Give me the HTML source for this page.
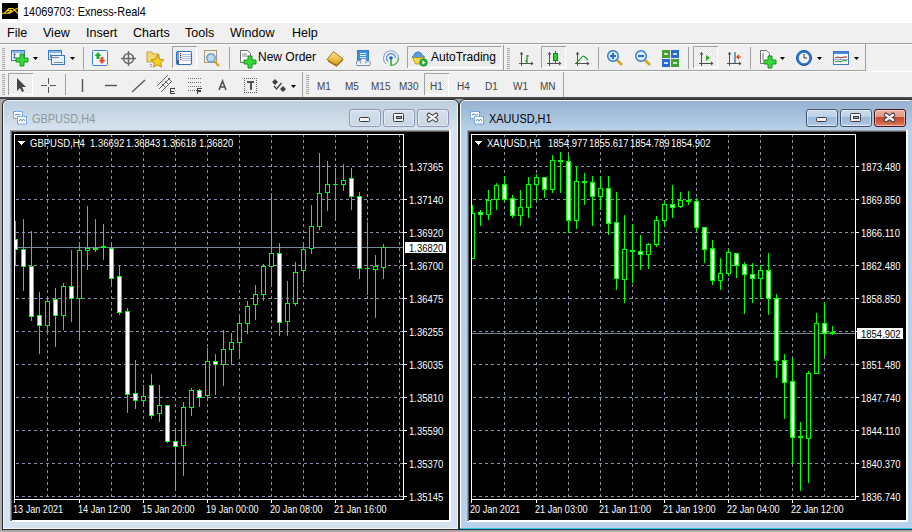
<!DOCTYPE html><html><head><meta charset="utf-8"><style>html,body{margin:0;padding:0;}body{width:912px;height:532px;overflow:hidden;position:relative;background:#f0f0f0;font-family:"Liberation Sans",sans-serif;}</style></head><body><div style="position:absolute;left:0px;top:0px;width:912px;height:23px;background:#fff"></div>
<svg style="position:absolute;left:2px;top:3px" width="16" height="16" viewBox="0 0 16 16"><rect width="16" height="16" fill="#000"/><path d="M0 10.3 H8 M2.3 10.3 L6.8 5.5 H11 M4.5 8.3 Q7 6.8 9.5 7.3 Q8.5 9.5 5.5 10 M7.5 10.3 L15.5 5.2 M10.8 5.6 L16 10.3" stroke="#f5c800" stroke-width="1.1" fill="none"/></svg>
<div style="position:absolute;left:23px;top:6px;font-size:12.5px;line-height:12.5px;color:#000;white-space:nowrap;transform:scaleX(0.875);transform-origin:0 0;">14069703: Exness-Real4</div>
<div style="position:absolute;left:0px;top:23px;width:912px;height:20px;background:#f0f0f0"></div>
<div style="position:absolute;left:7px;top:27px;font-size:12.5px;line-height:12.5px;color:#000;white-space:nowrap;">File</div>
<div style="position:absolute;left:43px;top:27px;font-size:12.5px;line-height:12.5px;color:#000;white-space:nowrap;">View</div>
<div style="position:absolute;left:86px;top:27px;font-size:12.5px;line-height:12.5px;color:#000;white-space:nowrap;">Insert</div>
<div style="position:absolute;left:133px;top:27px;font-size:12.5px;line-height:12.5px;color:#000;white-space:nowrap;">Charts</div>
<div style="position:absolute;left:185px;top:27px;font-size:12.5px;line-height:12.5px;color:#000;white-space:nowrap;">Tools</div>
<div style="position:absolute;left:230px;top:27px;font-size:12.5px;line-height:12.5px;color:#000;white-space:nowrap;">Window</div>
<div style="position:absolute;left:292px;top:27px;font-size:12.5px;line-height:12.5px;color:#000;white-space:nowrap;">Help</div>
<div style="position:absolute;left:0px;top:43px;width:912px;height:1px;background:#a0a0a0"></div>
<div style="position:absolute;left:0px;top:44px;width:912px;height:53px;background:#f0f0f0"></div>
<div style="position:absolute;left:0px;top:44px;width:912px;height:1px;background:#fbfbfb"></div>
<div style="position:absolute;left:0px;top:70px;width:866px;height:1px;background:#a0a0a0"></div>
<div style="position:absolute;left:865px;top:44px;width:1px;height:27px;background:#a0a0a0"></div>
<div style="position:absolute;left:0px;top:71px;width:912px;height:1px;background:#fdfdfd"></div>
<svg style="position:absolute;left:0;top:0" width="912" height="100"><defs><pattern id="chk" width="2" height="2" patternUnits="userSpaceOnUse"><rect width="2" height="2" fill="#f6f6f6"/><rect width="1" height="1" fill="#e6e6e6"/><rect x="1" y="1" width="1" height="1" fill="#e6e6e6"/></pattern></defs><rect x="2" y="48" width="3" height="1" fill="#a8a8a8"/><rect x="2" y="50" width="3" height="1" fill="#a8a8a8"/><rect x="2" y="52" width="3" height="1" fill="#a8a8a8"/><rect x="2" y="54" width="3" height="1" fill="#a8a8a8"/><rect x="2" y="56" width="3" height="1" fill="#a8a8a8"/><rect x="2" y="58" width="3" height="1" fill="#a8a8a8"/><rect x="2" y="60" width="3" height="1" fill="#a8a8a8"/><rect x="2" y="62" width="3" height="1" fill="#a8a8a8"/><rect x="2" y="64" width="3" height="1" fill="#a8a8a8"/><rect x="2" y="66" width="3" height="1" fill="#a8a8a8"/><rect x="2" y="68" width="3" height="1" fill="#a8a8a8"/><rect x="11.5" y="50.5" width="13" height="10" fill="#eaf2fb" stroke="#3a78c8"/><rect x="12" y="51" width="12" height="2" fill="#8ab8ec"/><path d="M14.5 53.5v5" stroke="#5a7aa8"/><path d="M13 55l1.5-1.5 1.5 1.5 M13 57l1.5 1.5 1.5-1.5" stroke="#5a7aa8" fill="none" stroke-width=".8"/><path d="M20 54 h4 v4 h4 v4 h-4 v4 h-4 v-4 h-4 v-4 h4 z" fill="#3ad83a" stroke="#108a10" stroke-width="0.9"/><path d="M33 57 h5 l-2.5 3 z" fill="#000"/><rect x="48.5" y="50.5" width="13" height="9" fill="#eaf2fb" stroke="#3a78c8"/><rect x="51.5" y="55.5" width="13" height="9" fill="#eaf2fb" stroke="#3a78c8"/><rect x="49" y="51" width="12" height="2" fill="#8ab8ec"/><path d="M51 57.5h8 M54 62.5h9 M50.5 54v4" stroke="#6a8ab8"/><path d="M70 57 h5 l-2.5 3 z" fill="#000"/><rect x="83" y="47" width="1" height="22" fill="#a0a0a0"/><rect x="92.5" y="50.5" width="15" height="15" rx="1" fill="#f4f8fc" stroke="#3a80d0"/><path d="M98 52 l-3.5 4 h2 v3 h3 v-3 h2 z" fill="#20b030"/><path d="M102 64 l3.5-4 h-2 v-3 h-3 v3 h-2 z" fill="#f05020"/><circle cx="128.5" cy="58.5" r="5" fill="none" stroke="#6a6a6a" stroke-width="1.5"/><path d="M128.5 51v15 M121 58.5h15" stroke="#6a6a6a" stroke-width="1.5"/><path d="M147 52h5l1 2h6v8h-12z" fill="#f2d870" stroke="#c8a030"/><path d="M157.5 55 l2 4.2 4.5 .6-3.3 3 .9 4.4-4.1-2.2-4.1 2.2.9-4.4-3.3-3 4.5-.6z" fill="#f5d020" stroke="#b08010" stroke-width="0.8"/><path d="M151 64v3" stroke="#444" stroke-dasharray="1 1"/><rect x="172" y="46" width="25" height="22" fill="url(#chk)"/><path d="M172.5 68 V46.5 H197" stroke="#a0a0a0" fill="none"/><path d="M196.5 47 V67.5 H173" stroke="#ffffff" fill="none"/><rect x="176.5" y="51.5" width="15" height="13" rx="1.5" fill="#fff" stroke="#3070c0" stroke-width="1.1"/><rect x="177" y="52" width="2" height="12" fill="#6aa0e0"/><path d="M178 60v4" stroke="#203040"/><path d="M182 54.5h9 M182 56.5h9 M182 58.5h9 M182 60.5h9" stroke="#8ab0e0" stroke-width=".8"/><rect x="180" y="53" width="1.2" height="1.2" fill="#e02020"/><rect x="180" y="55" width="1.2" height="1.2" fill="#222"/><rect x="180" y="57" width="1.2" height="1.2" fill="#222"/><rect x="180" y="59" width="1.2" height="1.2" fill="#e02020"/><rect x="204.5" y="50.5" width="12" height="12" fill="#f4f0e4" stroke="#a89878"/><circle cx="211" cy="58" r="4.2" fill="#bcd8f0" stroke="#4a90d8" stroke-width="1.2"/><path d="M214 61l5 5" stroke="#d0a020" stroke-width="2.2"/><rect x="229" y="47" width="1" height="22" fill="#a0a0a0"/><path d="M240.5 50.5h7l3 3v9h-10z" fill="#fafafa" stroke="#707070"/><path d="M242 54h5 M242 56h6" stroke="#909090"/><path d="M248 56 h4 v4 h4 v4 h-4 v4 h-4 v-4 h-4 v-4 h4 z" fill="#3ad83a" stroke="#108a10" stroke-width="0.9"/><defs><linearGradient id="gold" x1="0" y1="0" x2="0" y2="1"><stop offset="0" stop-color="#fbe88a"/><stop offset="1" stop-color="#d49a18"/></linearGradient></defs><path d="M327 59.5 L333.5 51.5 L343 59 L336.5 65.5 Z" fill="url(#gold)" stroke="#9a6410" stroke-width=".9"/><path d="M328 61 L336.5 66 L343 59.5" stroke="#a86c10" stroke-width="1.3" fill="none"/><rect x="357.5" y="50.5" width="11" height="10" fill="#3a90e8" stroke="#1a64c0" stroke-width=".8"/><path d="M360 53.5h6 M360 55.5h6 M360 57.5h6" stroke="#e8f4ff" stroke-width="1"/><g fill="#eef2fa" stroke="#6a84b0" stroke-width=".9"><circle cx="359" cy="63" r="2.6"/><circle cx="363.5" cy="61.5" r="3.3"/><circle cx="368" cy="63.3" r="2.5"/></g><path d="M357 63.5 h12 v1.8 h-12z" fill="#eef2fa"/><path d="M356.5 65.5 h13" stroke="#6a84b0" stroke-width=".9"/><path d="M386 64 A7.5 7.5 0 1 1 398.5 58" fill="none" stroke="#6a9ad8" stroke-width="1"/><path d="M388 61.5 A4.5 4.5 0 1 1 395.5 58" fill="none" stroke="#4a80d0" stroke-width="1.1"/><circle cx="391" cy="58" r="1.8" fill="#1a5ac8"/><path d="M391 59v7" stroke="#30b030" stroke-width="1.6"/><path d="M391.5 65.5 A7.5 7.5 0 0 0 398.5 58" fill="none" stroke="#50b050" stroke-width="1.4"/><rect x="407" y="46" width="94" height="22" fill="url(#chk)"/><path d="M407.5 68 V46.5 H501" stroke="#a0a0a0" fill="none"/><path d="M500.5 47 V67.5 H408" stroke="#ffffff" fill="none"/><path d="M412 57 q2-1.5 3-4 q3-2.5 6 0 q1 2.5 3.5 3.5 q-5 2.5-12.5 .5z" fill="#5aa0e0" stroke="#3a78b8" stroke-width=".8"/><path d="M412.5 57.5 h12 l-3 6.5 h-6z" fill="#f2d84a" stroke="#a88a20" stroke-width=".8"/><circle cx="423.5" cy="62.5" r="3.8" fill="#18b030" stroke="#0a8a20" stroke-width=".6"/><path d="M422.3 60.3v4.4l3.4-2.2z" fill="#fff"/><rect x="503" y="45" width="1" height="25" fill="#a0a0a0"/><rect x="507" y="48" width="3" height="1" fill="#a8a8a8"/><rect x="507" y="50" width="3" height="1" fill="#a8a8a8"/><rect x="507" y="52" width="3" height="1" fill="#a8a8a8"/><rect x="507" y="54" width="3" height="1" fill="#a8a8a8"/><rect x="507" y="56" width="3" height="1" fill="#a8a8a8"/><rect x="507" y="58" width="3" height="1" fill="#a8a8a8"/><rect x="507" y="60" width="3" height="1" fill="#a8a8a8"/><rect x="507" y="62" width="3" height="1" fill="#a8a8a8"/><rect x="507" y="64" width="3" height="1" fill="#a8a8a8"/><rect x="507" y="66" width="3" height="1" fill="#a8a8a8"/><rect x="507" y="68" width="3" height="1" fill="#a8a8a8"/><path d="M521.5 52 v14 M519 63.5 h14" stroke="#505050" stroke-width="1" fill="none"/><path d="M519.5 54.5 l2-2.5 2 2.5z M531 61.5 l2.5 2-2.5 2z" fill="#505050"/><path d="M527 55v8 M527 56h2 M525 61h2" stroke="#109010" stroke-width="1.2" fill="none"/><rect x="541" y="46" width="25" height="22" fill="url(#chk)"/><path d="M541.5 68 V46.5 H566" stroke="#a0a0a0" fill="none"/><path d="M565.5 47 V67.5 H542" stroke="#ffffff" fill="none"/><path d="M549.5 52 v14 M547 63.5 h14" stroke="#505050" stroke-width="1" fill="none"/><path d="M547.5 54.5 l2-2.5 2 2.5z M559 61.5 l2.5 2-2.5 2z" fill="#505050"/><rect x="553.5" y="53.5" width="4" height="7" fill="#30d030" stroke="#108010"/><path d="M555.5 51v2 M555.5 61v2" stroke="#108010"/><path d="M577.5 52 v14 M575 63.5 h14" stroke="#505050" stroke-width="1" fill="none"/><path d="M575.5 54.5 l2-2.5 2 2.5z M587 61.5 l2.5 2-2.5 2z" fill="#505050"/><path d="M576 63 q3-2 5-5 q2-3 4 -1 l3 3" stroke="#20a030" stroke-width="1.2" fill="none"/><rect x="598" y="47" width="1" height="22" fill="#a0a0a0"/><path d="M617 60 l5 5" stroke="#d0a818" stroke-width="2.6"/><circle cx="613" cy="56" r="5.3" fill="#d8ecfb" stroke="#2a78d0" stroke-width="1.4"/><path d="M610 56h6" stroke="#2a70c0" stroke-width="2"/><path d="M613 53v6" stroke="#2a70c0" stroke-width="2"/><path d="M645 60 l5 5" stroke="#d0a818" stroke-width="2.6"/><circle cx="641" cy="56" r="5.3" fill="#d8ecfb" stroke="#2a78d0" stroke-width="1.4"/><path d="M638 56h6" stroke="#2a70c0" stroke-width="2"/><rect x="662" y="50" width="8" height="8" fill="#40a030"/><rect x="671" y="50" width="8" height="8" fill="#2a6ad0"/><rect x="662" y="59" width="8" height="8" fill="#2a6ad0"/><rect x="671" y="59" width="8" height="8" fill="#40a030"/><path d="M664 54h4 M673 54h4 M664 63h4 M673 63h4" stroke="#fff" stroke-width="1.5"/><rect x="688" y="47" width="1" height="22" fill="#a0a0a0"/><rect x="693" y="46" width="25" height="22" fill="url(#chk)"/><path d="M693.5 68 V46.5 H718" stroke="#a0a0a0" fill="none"/><path d="M717.5 47 V67.5 H694" stroke="#ffffff" fill="none"/><path d="M701.5 52 v14 M699 63.5 h14" stroke="#505050" stroke-width="1" fill="none"/><path d="M699.5 54.5 l2-2.5 2 2.5z M711 61.5 l2.5 2-2.5 2z" fill="#505050"/><path d="M706 55v6l4-3z" fill="#20b020"/><path d="M729.5 52 v14 M727 63.5 h14" stroke="#505050" stroke-width="1" fill="none"/><path d="M727.5 54.5 l2-2.5 2 2.5z M739 61.5 l2.5 2-2.5 2z" fill="#505050"/><path d="M735 52v11" stroke="#2060a0" stroke-width="1.2"/><path d="M741 57h-4 M739 55l-2 2 2 2" stroke="#d04010" stroke-width="1.2" fill="none"/><rect x="750" y="47" width="1" height="22" fill="#a0a0a0"/><path d="M760.5 50.5h6l3 3v10h-9z" fill="#fafafa" stroke="#707070"/><path d="M763 53v7" stroke="#707070"/><path d="M768 56 h4 v4 h4 v4 h-4 v4 h-4 v-4 h-4 v-4 h4 z" fill="#3ad83a" stroke="#108a10" stroke-width="0.9"/><path d="M780 57 h5 l-2.5 3 z" fill="#000"/><circle cx="804" cy="58" r="7.5" fill="#2a78d8" stroke="#1850a0"/><circle cx="804" cy="58" r="5.2" fill="#f4f4f4"/><path d="M804 54v4h3" stroke="#333" stroke-width="1" fill="none"/><path d="M817 57 h5 l-2.5 3 z" fill="#000"/><rect x="833.5" y="51.5" width="15" height="13" fill="#f4f8ff" stroke="#3a78c8"/><rect x="834" y="52" width="14" height="2" fill="#4a88d8"/><path d="M835 58 l3-1 3 1 3-1 3 0" stroke="#b02020" fill="none"/><path d="M835 62 l3-1 3 1 3-2 3 1" stroke="#20a020" fill="none"/><path d="M834 59.5h14" stroke="#8ab0e0"/><path d="M854 57 h5 l-2.5 3 z" fill="#000"/><rect x="2" y="74" width="3" height="1" fill="#a8a8a8"/><rect x="2" y="76" width="3" height="1" fill="#a8a8a8"/><rect x="2" y="78" width="3" height="1" fill="#a8a8a8"/><rect x="2" y="80" width="3" height="1" fill="#a8a8a8"/><rect x="2" y="82" width="3" height="1" fill="#a8a8a8"/><rect x="2" y="84" width="3" height="1" fill="#a8a8a8"/><rect x="2" y="86" width="3" height="1" fill="#a8a8a8"/><rect x="2" y="88" width="3" height="1" fill="#a8a8a8"/><rect x="2" y="90" width="3" height="1" fill="#a8a8a8"/><rect x="2" y="92" width="3" height="1" fill="#a8a8a8"/><rect x="2" y="94" width="3" height="1" fill="#a8a8a8"/><rect x="8" y="73" width="25" height="22" fill="url(#chk)"/><path d="M8.5 95 V73.5 H33" stroke="#a0a0a0" fill="none"/><path d="M32.5 74 V94.5 H9" stroke="#ffffff" fill="none"/><path d="M17 78 v13 l3-3 2 4 2-1-2-4 4 0z" fill="#444"/><path d="M48.5 78v6 M48.5 87v6 M41 85.5h6 M50 85.5h6" stroke="#555" stroke-width="1" shape-rendering="crispEdges"/><rect x="65" y="74" width="1" height="21" fill="#a0a0a0"/><path d="M82.5 79v13" stroke="#555" stroke-width="1.4"/><path d="M105 85.5h12" stroke="#555" stroke-width="1.4"/><path d="M132 92 l13-12" stroke="#555" stroke-width="1.3"/><path d="M159 89 l11-11 M161 92 l11-11 M157 86 l11-11" stroke="#606060" stroke-width="1" fill="none"/><path d="M162 84 l3 3 M165 81 l3 3 M168 78 l3 3" stroke="#606060" stroke-width="1"/><path d="M170.5 88.5h4 M170.5 88v6 M170.5 91h3 M170.5 93.5h4" stroke="#404040" stroke-width="1" fill="none" shape-rendering="crispEdges"/><g fill="#707070" shape-rendering="crispEdges"><rect x="188" y="78" width="1" height="1"/><rect x="190" y="78" width="1" height="1"/><rect x="192" y="78" width="1" height="1"/><rect x="194" y="78" width="1" height="1"/><rect x="196" y="78" width="1" height="1"/><rect x="198" y="78" width="1" height="1"/><rect x="200" y="78" width="1" height="1"/><rect x="188" y="82" width="1" height="1"/><rect x="190" y="82" width="1" height="1"/><rect x="192" y="82" width="1" height="1"/><rect x="194" y="82" width="1" height="1"/><rect x="196" y="82" width="1" height="1"/><rect x="198" y="82" width="1" height="1"/><rect x="200" y="82" width="1" height="1"/><rect x="188" y="86" width="1" height="1"/><rect x="190" y="86" width="1" height="1"/><rect x="192" y="86" width="1" height="1"/><rect x="194" y="86" width="1" height="1"/><rect x="196" y="86" width="1" height="1"/><rect x="198" y="86" width="1" height="1"/><rect x="200" y="86" width="1" height="1"/><rect x="188" y="90" width="1" height="1"/><rect x="190" y="90" width="1" height="1"/><rect x="192" y="90" width="1" height="1"/><rect x="194" y="90" width="1" height="1"/><rect x="196" y="90" width="1" height="1"/></g><path d="M197.5 88v6 M197 88.5h5 M197 91h4" stroke="#404040" stroke-width="1.3" fill="none" shape-rendering="crispEdges"/><path d="M219 90 L222.5 81 L226 90 M220.3 87 h4.4" stroke="#505050" stroke-width="1.6" fill="none"/><g fill="#606060" shape-rendering="crispEdges"><rect x="244" y="78" width="1" height="1"/><rect x="244" y="92" width="1" height="1"/><rect x="246" y="78" width="1" height="1"/><rect x="246" y="92" width="1" height="1"/><rect x="248" y="78" width="1" height="1"/><rect x="248" y="92" width="1" height="1"/><rect x="250" y="78" width="1" height="1"/><rect x="250" y="92" width="1" height="1"/><rect x="252" y="78" width="1" height="1"/><rect x="252" y="92" width="1" height="1"/><rect x="254" y="78" width="1" height="1"/><rect x="254" y="92" width="1" height="1"/><rect x="256" y="78" width="1" height="1"/><rect x="256" y="92" width="1" height="1"/><rect x="244" y="78" width="1" height="1"/><rect x="256" y="78" width="1" height="1"/><rect x="244" y="80" width="1" height="1"/><rect x="256" y="80" width="1" height="1"/><rect x="244" y="82" width="1" height="1"/><rect x="256" y="82" width="1" height="1"/><rect x="244" y="84" width="1" height="1"/><rect x="256" y="84" width="1" height="1"/><rect x="244" y="86" width="1" height="1"/><rect x="256" y="86" width="1" height="1"/><rect x="244" y="88" width="1" height="1"/><rect x="256" y="88" width="1" height="1"/><rect x="244" y="90" width="1" height="1"/><rect x="256" y="90" width="1" height="1"/><rect x="244" y="92" width="1" height="1"/><rect x="256" y="92" width="1" height="1"/></g><path d="M247 81.5h7 M250.5 81v9" stroke="#505050" stroke-width="2" fill="none" shape-rendering="crispEdges"/><path d="M275 79 l3 3 -3 3 -3-3z M283 86 l3 3 -3 3 -3-3z" fill="#404040"/><path d="M274 86 l2.5 3 l5-6" stroke="#404040" stroke-width="1.3" fill="none"/><path d="M291 85 h5 l-2.5 3 z" fill="#000"/><rect x="302" y="72" width="1" height="25" fill="#a0a0a0"/><rect x="306" y="75" width="3" height="1" fill="#a8a8a8"/><rect x="306" y="77" width="3" height="1" fill="#a8a8a8"/><rect x="306" y="79" width="3" height="1" fill="#a8a8a8"/><rect x="306" y="81" width="3" height="1" fill="#a8a8a8"/><rect x="306" y="83" width="3" height="1" fill="#a8a8a8"/><rect x="306" y="85" width="3" height="1" fill="#a8a8a8"/><rect x="306" y="87" width="3" height="1" fill="#a8a8a8"/><rect x="306" y="89" width="3" height="1" fill="#a8a8a8"/><rect x="306" y="91" width="3" height="1" fill="#a8a8a8"/><rect x="306" y="93" width="3" height="1" fill="#a8a8a8"/><rect x="424" y="73" width="25" height="22" fill="url(#chk)"/><path d="M424.5 95 V73.5 H449" stroke="#a0a0a0" fill="none"/><path d="M448.5 74 V94.5 H425" stroke="#ffffff" fill="none"/><rect x="563" y="72" width="1" height="25" fill="#a0a0a0"/></svg>
<div style="position:absolute;left:317px;top:82px;font-size:10px;line-height:10px;color:#444;white-space:nowrap;">M1</div>
<div style="position:absolute;left:345px;top:82px;font-size:10px;line-height:10px;color:#444;white-space:nowrap;">M5</div>
<div style="position:absolute;left:371px;top:82px;font-size:10px;line-height:10px;color:#444;white-space:nowrap;">M15</div>
<div style="position:absolute;left:399px;top:82px;font-size:10px;line-height:10px;color:#444;white-space:nowrap;">M30</div>
<div style="position:absolute;left:430px;top:82px;font-size:10px;line-height:10px;color:#444;white-space:nowrap;">H1</div>
<div style="position:absolute;left:457px;top:82px;font-size:10px;line-height:10px;color:#444;white-space:nowrap;">H4</div>
<div style="position:absolute;left:485px;top:82px;font-size:10px;line-height:10px;color:#444;white-space:nowrap;">D1</div>
<div style="position:absolute;left:513px;top:82px;font-size:10px;line-height:10px;color:#444;white-space:nowrap;">W1</div>
<div style="position:absolute;left:540px;top:82px;font-size:10px;line-height:10px;color:#444;white-space:nowrap;">MN</div>
<div style="position:absolute;left:258px;top:51px;font-size:12px;line-height:12px;color:#000;white-space:nowrap;">New Order</div>
<div style="position:absolute;left:431px;top:51px;font-size:12px;line-height:12px;color:#000;white-space:nowrap;">AutoTrading</div>
<div style="position:absolute;left:0px;top:97px;width:912px;height:435px;background:#ababab"></div>
<div style="position:absolute;left:0px;top:97px;width:912px;height:2px;background:#4a4a4a"></div>
<div style="position:absolute;left:2px;top:99px;width:457px;height:431px;background:#2a2a2a;border-radius:6px 6px 0 0"></div>
<div style="position:absolute;left:3px;top:100px;width:455px;height:429px;background:#eef4fc;border-radius:5px 5px 0 0"></div>
<div style="position:absolute;left:4px;top:101px;width:453px;height:427px;background:#d5e3f0;border-radius:4px 4px 0 0"></div>
<div style="position:absolute;left:4px;top:101px;width:453px;height:29px;background:linear-gradient(#bccddc,#d6e3ef);border-radius:4px 4px 0 0"></div>
<div style="position:absolute;left:3px;top:528px;width:455px;height:1px;background:#f4f8ff"></div>
<svg style="position:absolute;left:13px;top:111px" width="15" height="14" viewBox="0 0 15 14"><rect x="0.5" y="0.5" width="9" height="7" fill="#fff" stroke="#3a80e0" stroke-dasharray="1 .6"/><rect x="4.5" y="5.5" width="9" height="7.5" fill="#fff" stroke="#3a80e0" stroke-dasharray="1 .6"/><path d="M2 4 l2-1 2 1 2-1 M6 10 l1.5-2 1.5 2 1.5-2 1.5 2" stroke="#3a70c0" stroke-width=".8" fill="none"/></svg>
<div style="position:absolute;left:32px;top:113px;font-size:12.5px;line-height:12.5px;color:#8f969c;white-space:nowrap;transform:scaleX(0.875);transform-origin:0 0;">GBPUSD,H4</div>
<div style="position:absolute;left:349px;top:109px;width:32px;height:18px;background:linear-gradient(#d4dfeb,#c9d6e4);border:1px solid #8a98b4;border-radius:3px;box-sizing:border-box;box-shadow:inset 0 0 0 1px rgba(255,255,255,0.45)"></div>
<div style="position:absolute;left:383px;top:109px;width:32px;height:18px;background:linear-gradient(#d4dfeb,#c9d6e4);border:1px solid #8a98b4;border-radius:3px;box-sizing:border-box;box-shadow:inset 0 0 0 1px rgba(255,255,255,0.45)"></div>
<div style="position:absolute;left:417px;top:109px;width:32px;height:18px;background:linear-gradient(#d4dfeb,#c9d6e4);border:1px solid #8a98b4;border-radius:3px;box-sizing:border-box;box-shadow:inset 0 0 0 1px rgba(255,255,255,0.45)"></div>
<svg style="position:absolute;left:0px;top:0px" width="912" height="532" viewBox="0 0 912 532"><rect x="359.5" y="117.5" width="10" height="4" rx="1" fill="#f2f2f2" stroke="#3a3a44"/><rect x="393.5" y="113.5" width="10" height="8" rx="1" fill="#f2f2f2" stroke="#3a3a44"/><rect x="396.5" y="116.5" width="5" height="2" fill="#8aa6c4" stroke="#3a3a44"/><path d="M429 115 L436 120 M436 115 L429 120" stroke="#3a3a44" stroke-width="4.6" stroke-linecap="round"/><path d="M429 115 L436 120 M436 115 L429 120" stroke="#f2f2f2" stroke-width="2.6" stroke-linecap="round"/></svg>
<div style="position:absolute;left:10px;top:130px;width:441px;height:392px;background:#fff"></div>
<div style="position:absolute;left:10px;top:130px;width:439px;height:1px;background:#a0a0a0"></div>
<div style="position:absolute;left:10px;top:130px;width:1px;height:391px;background:#a0a0a0"></div>
<div style="position:absolute;left:11px;top:131px;width:438px;height:1px;background:#5a5a5a"></div>
<div style="position:absolute;left:11px;top:131px;width:1px;height:390px;background:#5a5a5a"></div>
<div style="position:absolute;left:12px;top:132px;width:437px;height:388px;background:#000"></div>
<svg shape-rendering="crispEdges" style="position:absolute;left:0px;top:0px" width="912" height="532" viewBox="0 0 912 532"><line x1="16" y1="166.5" x2="403" y2="166.5" stroke="#8794a8" stroke-width="1" stroke-dasharray="3 3"/><rect x="404" y="166" width="3" height="1" fill="#fff"/><line x1="16" y1="199.5" x2="403" y2="199.5" stroke="#8794a8" stroke-width="1" stroke-dasharray="3 3"/><rect x="404" y="199" width="3" height="1" fill="#fff"/><line x1="16" y1="232.5" x2="403" y2="232.5" stroke="#8794a8" stroke-width="1" stroke-dasharray="3 3"/><rect x="404" y="232" width="3" height="1" fill="#fff"/><line x1="16" y1="265.5" x2="403" y2="265.5" stroke="#8794a8" stroke-width="1" stroke-dasharray="3 3"/><rect x="404" y="265" width="3" height="1" fill="#fff"/><line x1="16" y1="298.5" x2="403" y2="298.5" stroke="#8794a8" stroke-width="1" stroke-dasharray="3 3"/><rect x="404" y="298" width="3" height="1" fill="#fff"/><line x1="16" y1="331.5" x2="403" y2="331.5" stroke="#8794a8" stroke-width="1" stroke-dasharray="3 3"/><rect x="404" y="331" width="3" height="1" fill="#fff"/><line x1="16" y1="364.5" x2="403" y2="364.5" stroke="#8794a8" stroke-width="1" stroke-dasharray="3 3"/><rect x="404" y="364" width="3" height="1" fill="#fff"/><line x1="16" y1="397.5" x2="403" y2="397.5" stroke="#8794a8" stroke-width="1" stroke-dasharray="3 3"/><rect x="404" y="397" width="3" height="1" fill="#fff"/><line x1="16" y1="430.5" x2="403" y2="430.5" stroke="#8794a8" stroke-width="1" stroke-dasharray="3 3"/><rect x="404" y="430" width="3" height="1" fill="#fff"/><line x1="16" y1="463.5" x2="403" y2="463.5" stroke="#8794a8" stroke-width="1" stroke-dasharray="3 3"/><rect x="404" y="463" width="3" height="1" fill="#fff"/><line x1="16" y1="496.5" x2="403" y2="496.5" stroke="#8794a8" stroke-width="1" stroke-dasharray="3 3"/><rect x="404" y="496" width="3" height="1" fill="#fff"/><line x1="47.5" y1="134" x2="47.5" y2="499" stroke="#8794a8" stroke-width="1" stroke-dasharray="3 3"/><line x1="79.5" y1="134" x2="79.5" y2="499" stroke="#8794a8" stroke-width="1" stroke-dasharray="3 3"/><line x1="111.5" y1="134" x2="111.5" y2="499" stroke="#8794a8" stroke-width="1" stroke-dasharray="3 3"/><line x1="143.5" y1="134" x2="143.5" y2="499" stroke="#8794a8" stroke-width="1" stroke-dasharray="3 3"/><line x1="175.5" y1="134" x2="175.5" y2="499" stroke="#8794a8" stroke-width="1" stroke-dasharray="3 3"/><line x1="207.5" y1="134" x2="207.5" y2="499" stroke="#8794a8" stroke-width="1" stroke-dasharray="3 3"/><line x1="239.5" y1="134" x2="239.5" y2="499" stroke="#8794a8" stroke-width="1" stroke-dasharray="3 3"/><line x1="271.5" y1="134" x2="271.5" y2="499" stroke="#8794a8" stroke-width="1" stroke-dasharray="3 3"/><line x1="303.5" y1="134" x2="303.5" y2="499" stroke="#8794a8" stroke-width="1" stroke-dasharray="3 3"/><line x1="335.5" y1="134" x2="335.5" y2="499" stroke="#8794a8" stroke-width="1" stroke-dasharray="3 3"/><line x1="367.5" y1="134" x2="367.5" y2="499" stroke="#8794a8" stroke-width="1" stroke-dasharray="3 3"/><line x1="399.5" y1="134" x2="399.5" y2="499" stroke="#8794a8" stroke-width="1" stroke-dasharray="3 3"/><rect x="14" y="500" width="1" height="3" fill="#fff"/><rect x="79" y="500" width="1" height="3" fill="#fff"/><rect x="143" y="500" width="1" height="3" fill="#fff"/><rect x="207" y="500" width="1" height="3" fill="#fff"/><rect x="271" y="500" width="1" height="3" fill="#fff"/><rect x="335" y="500" width="1" height="3" fill="#fff"/><rect x="14.5" y="134.5" width="389" height="365" fill="none" stroke="#fff"/><rect x="15" y="247" width="388" height="1" fill="#778899"/><clipPath id="c14"><rect x="15" y="135" width="388" height="364"/></clipPath><g clip-path="url(#c14)"><rect x="15" y="221" width="1" height="45" fill="#00ff00"/><rect x="13" y="239" width="5" height="11" fill="#00ff00"/><rect x="14" y="240" width="3" height="9" fill="#fff"/><rect x="23" y="219" width="1" height="72" fill="#00ff00"/><rect x="21" y="249" width="5" height="18" fill="#00ff00"/><rect x="22" y="250" width="3" height="16" fill="#fff"/><rect x="31" y="231" width="1" height="90" fill="#00ff00"/><rect x="29" y="266" width="5" height="51" fill="#00ff00"/><rect x="30" y="267" width="3" height="49" fill="#fff"/><rect x="39" y="292" width="1" height="62" fill="#00ff00"/><rect x="37" y="315" width="5" height="11" fill="#00ff00"/><rect x="38" y="316" width="3" height="9" fill="#fff"/><rect x="47" y="296" width="1" height="37" fill="#00ff00"/><rect x="45" y="301" width="5" height="25" fill="#00ff00"/><rect x="46" y="302" width="3" height="23" fill="#000"/><rect x="55" y="288" width="1" height="59" fill="#00ff00"/><rect x="53" y="299" width="5" height="17" fill="#00ff00"/><rect x="54" y="300" width="3" height="15" fill="#fff"/><rect x="63" y="283" width="1" height="47" fill="#00ff00"/><rect x="61" y="286" width="5" height="30" fill="#00ff00"/><rect x="62" y="287" width="3" height="28" fill="#000"/><rect x="71" y="250" width="1" height="72" fill="#00ff00"/><rect x="69" y="286" width="5" height="13" fill="#00ff00"/><rect x="70" y="287" width="3" height="11" fill="#fff"/><rect x="79" y="245" width="1" height="96" fill="#00ff00"/><rect x="77" y="250" width="5" height="49" fill="#00ff00"/><rect x="78" y="251" width="3" height="47" fill="#000"/><rect x="87" y="206" width="1" height="64" fill="#00ff00"/><rect x="85" y="248" width="5" height="3" fill="#00ff00"/><rect x="86" y="249" width="3" height="1" fill="#000"/><rect x="95" y="219" width="1" height="33" fill="#00ff00"/><rect x="93" y="248" width="5" height="2" fill="#00ff00"/><rect x="103" y="224" width="1" height="36" fill="#00ff00"/><rect x="101" y="246" width="5" height="2" fill="#00ff00"/><rect x="111" y="244" width="1" height="42" fill="#00ff00"/><rect x="109" y="248" width="5" height="31" fill="#00ff00"/><rect x="110" y="249" width="3" height="29" fill="#fff"/><rect x="119" y="266" width="1" height="49" fill="#00ff00"/><rect x="117" y="276" width="5" height="37" fill="#00ff00"/><rect x="118" y="277" width="3" height="35" fill="#fff"/><rect x="127" y="308" width="1" height="105" fill="#00ff00"/><rect x="125" y="311" width="5" height="84" fill="#00ff00"/><rect x="126" y="312" width="3" height="82" fill="#fff"/><rect x="135" y="360" width="1" height="49" fill="#00ff00"/><rect x="133" y="393" width="5" height="8" fill="#00ff00"/><rect x="134" y="394" width="3" height="6" fill="#fff"/><rect x="143" y="385" width="1" height="22" fill="#00ff00"/><rect x="141" y="396" width="5" height="5" fill="#00ff00"/><rect x="142" y="397" width="3" height="3" fill="#000"/><rect x="151" y="374" width="1" height="45" fill="#00ff00"/><rect x="149" y="385" width="5" height="31" fill="#00ff00"/><rect x="150" y="386" width="3" height="29" fill="#fff"/><rect x="159" y="385" width="1" height="37" fill="#00ff00"/><rect x="157" y="405" width="5" height="9" fill="#00ff00"/><rect x="158" y="406" width="3" height="7" fill="#000"/><rect x="167" y="405" width="1" height="38" fill="#00ff00"/><rect x="165" y="405" width="5" height="37" fill="#00ff00"/><rect x="166" y="406" width="3" height="35" fill="#fff"/><rect x="175" y="428" width="1" height="63" fill="#00ff00"/><rect x="173" y="441" width="5" height="6" fill="#00ff00"/><rect x="174" y="442" width="3" height="4" fill="#fff"/><rect x="183" y="402" width="1" height="74" fill="#00ff00"/><rect x="181" y="407" width="5" height="39" fill="#00ff00"/><rect x="182" y="408" width="3" height="37" fill="#000"/><rect x="191" y="388" width="1" height="28" fill="#00ff00"/><rect x="189" y="390" width="5" height="18" fill="#00ff00"/><rect x="190" y="391" width="3" height="16" fill="#000"/><rect x="199" y="389" width="1" height="18" fill="#00ff00"/><rect x="197" y="390" width="5" height="8" fill="#00ff00"/><rect x="198" y="391" width="3" height="6" fill="#fff"/><rect x="207" y="348" width="1" height="51" fill="#00ff00"/><rect x="205" y="361" width="5" height="35" fill="#00ff00"/><rect x="206" y="362" width="3" height="33" fill="#000"/><rect x="215" y="354" width="1" height="41" fill="#00ff00"/><rect x="213" y="361" width="5" height="4" fill="#00ff00"/><rect x="214" y="362" width="3" height="2" fill="#fff"/><rect x="223" y="330" width="1" height="56" fill="#00ff00"/><rect x="221" y="349" width="5" height="16" fill="#00ff00"/><rect x="222" y="350" width="3" height="14" fill="#000"/><rect x="231" y="333" width="1" height="32" fill="#00ff00"/><rect x="229" y="342" width="5" height="8" fill="#00ff00"/><rect x="230" y="343" width="3" height="6" fill="#000"/><rect x="239" y="315" width="1" height="43" fill="#00ff00"/><rect x="237" y="323" width="5" height="20" fill="#00ff00"/><rect x="238" y="324" width="3" height="18" fill="#000"/><rect x="247" y="301" width="1" height="33" fill="#00ff00"/><rect x="245" y="306" width="5" height="18" fill="#00ff00"/><rect x="246" y="307" width="3" height="16" fill="#000"/><rect x="255" y="285" width="1" height="35" fill="#00ff00"/><rect x="253" y="294" width="5" height="11" fill="#00ff00"/><rect x="254" y="295" width="3" height="9" fill="#000"/><rect x="263" y="264" width="1" height="37" fill="#00ff00"/><rect x="261" y="266" width="5" height="29" fill="#00ff00"/><rect x="262" y="267" width="3" height="27" fill="#000"/><rect x="271" y="193" width="1" height="92" fill="#00ff00"/><rect x="269" y="253" width="5" height="14" fill="#00ff00"/><rect x="270" y="254" width="3" height="12" fill="#000"/><rect x="279" y="243" width="1" height="93" fill="#00ff00"/><rect x="277" y="253" width="5" height="70" fill="#00ff00"/><rect x="278" y="254" width="3" height="68" fill="#fff"/><rect x="287" y="281" width="1" height="55" fill="#00ff00"/><rect x="285" y="303" width="5" height="19" fill="#00ff00"/><rect x="286" y="304" width="3" height="17" fill="#000"/><rect x="295" y="262" width="1" height="44" fill="#00ff00"/><rect x="293" y="272" width="5" height="32" fill="#00ff00"/><rect x="294" y="273" width="3" height="30" fill="#000"/><rect x="303" y="243" width="1" height="40" fill="#00ff00"/><rect x="301" y="249" width="5" height="22" fill="#00ff00"/><rect x="302" y="250" width="3" height="20" fill="#000"/><rect x="311" y="205" width="1" height="49" fill="#00ff00"/><rect x="309" y="226" width="5" height="23" fill="#00ff00"/><rect x="310" y="227" width="3" height="21" fill="#000"/><rect x="319" y="153" width="1" height="77" fill="#00ff00"/><rect x="317" y="193" width="5" height="34" fill="#00ff00"/><rect x="318" y="194" width="3" height="32" fill="#000"/><rect x="327" y="161" width="1" height="50" fill="#00ff00"/><rect x="325" y="184" width="5" height="9" fill="#00ff00"/><rect x="326" y="185" width="3" height="7" fill="#000"/><rect x="335" y="168" width="1" height="50" fill="#00ff00"/><rect x="333" y="184" width="5" height="1" fill="#00ff00"/><rect x="343" y="164" width="1" height="27" fill="#00ff00"/><rect x="341" y="180" width="5" height="5" fill="#00ff00"/><rect x="342" y="181" width="3" height="3" fill="#000"/><rect x="351" y="168" width="1" height="42" fill="#00ff00"/><rect x="349" y="178" width="5" height="19" fill="#00ff00"/><rect x="350" y="179" width="3" height="17" fill="#fff"/><rect x="359" y="192" width="1" height="87" fill="#00ff00"/><rect x="357" y="196" width="5" height="73" fill="#00ff00"/><rect x="358" y="197" width="3" height="71" fill="#fff"/><rect x="367" y="222" width="1" height="73" fill="#00ff00"/><rect x="365" y="268" width="5" height="1" fill="#00ff00"/><rect x="375" y="255" width="1" height="63" fill="#00ff00"/><rect x="373" y="266" width="5" height="4" fill="#00ff00"/><rect x="374" y="267" width="3" height="2" fill="#000"/><rect x="383" y="244" width="1" height="35" fill="#00ff00"/><rect x="381" y="247" width="5" height="21" fill="#00ff00"/><rect x="382" y="248" width="3" height="19" fill="#000"/></g><path d="M18 141 h7 l-3.5 4z" fill="#fff"/></svg>
<div style="position:absolute;left:409px;top:163px;font-size:10px;line-height:10px;color:#fff;white-space:nowrap;transform:scaleX(0.95);transform-origin:0 0;">1.37365</div>
<div style="position:absolute;left:409px;top:196px;font-size:10px;line-height:10px;color:#fff;white-space:nowrap;transform:scaleX(0.95);transform-origin:0 0;">1.37140</div>
<div style="position:absolute;left:409px;top:229px;font-size:10px;line-height:10px;color:#fff;white-space:nowrap;transform:scaleX(0.95);transform-origin:0 0;">1.36920</div>
<div style="position:absolute;left:409px;top:262px;font-size:10px;line-height:10px;color:#fff;white-space:nowrap;transform:scaleX(0.95);transform-origin:0 0;">1.36700</div>
<div style="position:absolute;left:409px;top:295px;font-size:10px;line-height:10px;color:#fff;white-space:nowrap;transform:scaleX(0.95);transform-origin:0 0;">1.36475</div>
<div style="position:absolute;left:409px;top:328px;font-size:10px;line-height:10px;color:#fff;white-space:nowrap;transform:scaleX(0.95);transform-origin:0 0;">1.36255</div>
<div style="position:absolute;left:409px;top:361px;font-size:10px;line-height:10px;color:#fff;white-space:nowrap;transform:scaleX(0.95);transform-origin:0 0;">1.36035</div>
<div style="position:absolute;left:409px;top:394px;font-size:10px;line-height:10px;color:#fff;white-space:nowrap;transform:scaleX(0.95);transform-origin:0 0;">1.35810</div>
<div style="position:absolute;left:409px;top:427px;font-size:10px;line-height:10px;color:#fff;white-space:nowrap;transform:scaleX(0.95);transform-origin:0 0;">1.35590</div>
<div style="position:absolute;left:409px;top:460px;font-size:10px;line-height:10px;color:#fff;white-space:nowrap;transform:scaleX(0.95);transform-origin:0 0;">1.35370</div>
<div style="position:absolute;left:409px;top:493px;font-size:10px;line-height:10px;color:#fff;white-space:nowrap;transform:scaleX(0.95);transform-origin:0 0;">1.35145</div>
<div style="position:absolute;left:13px;top:505px;font-size:10px;line-height:10px;color:#fff;white-space:nowrap;transform:scaleX(0.91);transform-origin:0 0;">13 Jan 2021</div>
<div style="position:absolute;left:78px;top:505px;font-size:10px;line-height:10px;color:#fff;white-space:nowrap;transform:scaleX(0.91);transform-origin:0 0;">14 Jan 12:00</div>
<div style="position:absolute;left:142px;top:505px;font-size:10px;line-height:10px;color:#fff;white-space:nowrap;transform:scaleX(0.91);transform-origin:0 0;">15 Jan 20:00</div>
<div style="position:absolute;left:206px;top:505px;font-size:10px;line-height:10px;color:#fff;white-space:nowrap;transform:scaleX(0.91);transform-origin:0 0;">19 Jan 00:00</div>
<div style="position:absolute;left:270px;top:505px;font-size:10px;line-height:10px;color:#fff;white-space:nowrap;transform:scaleX(0.91);transform-origin:0 0;">20 Jan 08:00</div>
<div style="position:absolute;left:334px;top:505px;font-size:10px;line-height:10px;color:#fff;white-space:nowrap;transform:scaleX(0.91);transform-origin:0 0;">21 Jan 16:00</div>
<div style="position:absolute;left:30px;top:139px;font-size:10px;line-height:10px;color:#fff;white-space:nowrap;transform:scaleX(0.95);transform-origin:0 0;">GBPUSD,H4</div>
<div style="position:absolute;left:90px;top:139px;font-size:10px;line-height:10px;color:#fff;white-space:nowrap;transform:scaleX(0.95);transform-origin:0 0;">1.36692</div>
<div style="position:absolute;left:126px;top:139px;font-size:10px;line-height:10px;color:#fff;white-space:nowrap;transform:scaleX(0.95);transform-origin:0 0;">1.36843</div>
<div style="position:absolute;left:162px;top:139px;font-size:10px;line-height:10px;color:#fff;white-space:nowrap;transform:scaleX(0.95);transform-origin:0 0;">1.36618</div>
<div style="position:absolute;left:199px;top:139px;font-size:10px;line-height:10px;color:#fff;white-space:nowrap;transform:scaleX(0.95);transform-origin:0 0;">1.36820</div>
<div style="position:absolute;left:405px;top:242px;width:41px;height:11px;background:#fff"></div>
<div style="position:absolute;left:409px;top:244px;font-size:10px;line-height:10px;color:#000;white-space:nowrap;transform:scaleX(0.95);transform-origin:0 0;">1.36820</div>
<div style="position:absolute;left:459px;top:99px;width:457px;height:431px;background:#2a2a2a;border-radius:6px 6px 0 0"></div>
<div style="position:absolute;left:460px;top:100px;width:455px;height:429px;background:#ffffff;border-radius:5px 5px 0 0"></div>
<div style="position:absolute;left:461px;top:101px;width:453px;height:427px;background:#b9d1ea;border-radius:4px 4px 0 0"></div>
<div style="position:absolute;left:461px;top:101px;width:453px;height:29px;background:linear-gradient(#94b1cf,#b8d1ea);border-radius:4px 4px 0 0"></div>
<div style="position:absolute;left:460px;top:528px;width:455px;height:1px;background:#2bd0f0"></div>
<svg style="position:absolute;left:470px;top:111px" width="15" height="14" viewBox="0 0 15 14"><rect x="0.5" y="0.5" width="9" height="7" fill="#fff" stroke="#3a80e0" stroke-dasharray="1 .6"/><rect x="4.5" y="5.5" width="9" height="7.5" fill="#fff" stroke="#3a80e0" stroke-dasharray="1 .6"/><path d="M2 4 l2-1 2 1 2-1 M6 10 l1.5-2 1.5 2 1.5-2 1.5 2" stroke="#3a70c0" stroke-width=".8" fill="none"/></svg>
<div style="position:absolute;left:489px;top:113px;font-size:12.5px;line-height:12.5px;color:#000;white-space:nowrap;transform:scaleX(0.875);transform-origin:0 0;">XAUUSD,H1</div>
<div style="position:absolute;left:806px;top:109px;width:32px;height:18px;background:linear-gradient(#cddcef 0%,#bcd1ea 44%,#9db9d9 45%,#a9c3e1 85%,#c4d8ee 100%);border:1px solid #44546c;border-radius:3px;box-sizing:border-box;box-shadow:inset 0 0 0 1px rgba(255,255,255,0.45)"></div>
<div style="position:absolute;left:840px;top:109px;width:32px;height:18px;background:linear-gradient(#cddcef 0%,#bcd1ea 44%,#9db9d9 45%,#a9c3e1 85%,#c4d8ee 100%);border:1px solid #44546c;border-radius:3px;box-sizing:border-box;box-shadow:inset 0 0 0 1px rgba(255,255,255,0.45)"></div>
<div style="position:absolute;left:874px;top:109px;width:32px;height:18px;background:linear-gradient(#eab0a2 0%,#e49884 44%,#c24a2c 45%,#cc5c40 75%,#e0846c 100%);border:1px solid #4a1018;border-radius:3px;box-sizing:border-box;box-shadow:inset 0 0 0 1px rgba(255,255,255,0.45)"></div>
<svg style="position:absolute;left:0px;top:0px" width="912" height="532" viewBox="0 0 912 532"><rect x="816.5" y="117.5" width="10" height="4" rx="1" fill="#f2f2f2" stroke="#3a3a44"/><rect x="850.5" y="113.5" width="10" height="8" rx="1" fill="#f2f2f2" stroke="#3a3a44"/><rect x="853.5" y="116.5" width="5" height="2" fill="#8aa6c4" stroke="#3a3a44"/><path d="M886 115 L893 120 M893 115 L886 120" stroke="#3a3a44" stroke-width="4.6" stroke-linecap="round"/><path d="M886 115 L893 120 M893 115 L886 120" stroke="#f2f2f2" stroke-width="2.6" stroke-linecap="round"/></svg>
<div style="position:absolute;left:467px;top:130px;width:441px;height:392px;background:#fff"></div>
<div style="position:absolute;left:467px;top:130px;width:439px;height:1px;background:#a0a0a0"></div>
<div style="position:absolute;left:467px;top:130px;width:1px;height:391px;background:#a0a0a0"></div>
<div style="position:absolute;left:468px;top:131px;width:438px;height:1px;background:#5a5a5a"></div>
<div style="position:absolute;left:468px;top:131px;width:1px;height:390px;background:#5a5a5a"></div>
<div style="position:absolute;left:469px;top:132px;width:437px;height:388px;background:#000"></div>
<svg shape-rendering="crispEdges" style="position:absolute;left:0px;top:0px" width="912" height="532" viewBox="0 0 912 532"><line x1="473" y1="166.5" x2="855" y2="166.5" stroke="#8794a8" stroke-width="1" stroke-dasharray="3 3"/><rect x="856" y="166" width="3" height="1" fill="#fff"/><line x1="473" y1="199.5" x2="855" y2="199.5" stroke="#8794a8" stroke-width="1" stroke-dasharray="3 3"/><rect x="856" y="199" width="3" height="1" fill="#fff"/><line x1="473" y1="232.5" x2="855" y2="232.5" stroke="#8794a8" stroke-width="1" stroke-dasharray="3 3"/><rect x="856" y="232" width="3" height="1" fill="#fff"/><line x1="473" y1="265.5" x2="855" y2="265.5" stroke="#8794a8" stroke-width="1" stroke-dasharray="3 3"/><rect x="856" y="265" width="3" height="1" fill="#fff"/><line x1="473" y1="298.5" x2="855" y2="298.5" stroke="#8794a8" stroke-width="1" stroke-dasharray="3 3"/><rect x="856" y="298" width="3" height="1" fill="#fff"/><line x1="473" y1="331.5" x2="855" y2="331.5" stroke="#8794a8" stroke-width="1" stroke-dasharray="3 3"/><rect x="856" y="331" width="3" height="1" fill="#fff"/><line x1="473" y1="364.5" x2="855" y2="364.5" stroke="#8794a8" stroke-width="1" stroke-dasharray="3 3"/><rect x="856" y="364" width="3" height="1" fill="#fff"/><line x1="473" y1="397.5" x2="855" y2="397.5" stroke="#8794a8" stroke-width="1" stroke-dasharray="3 3"/><rect x="856" y="397" width="3" height="1" fill="#fff"/><line x1="473" y1="430.5" x2="855" y2="430.5" stroke="#8794a8" stroke-width="1" stroke-dasharray="3 3"/><rect x="856" y="430" width="3" height="1" fill="#fff"/><line x1="473" y1="463.5" x2="855" y2="463.5" stroke="#8794a8" stroke-width="1" stroke-dasharray="3 3"/><rect x="856" y="463" width="3" height="1" fill="#fff"/><line x1="473" y1="496.5" x2="855" y2="496.5" stroke="#8794a8" stroke-width="1" stroke-dasharray="3 3"/><rect x="856" y="496" width="3" height="1" fill="#fff"/><line x1="504.5" y1="134" x2="504.5" y2="499" stroke="#8794a8" stroke-width="1" stroke-dasharray="3 3"/><line x1="536.5" y1="134" x2="536.5" y2="499" stroke="#8794a8" stroke-width="1" stroke-dasharray="3 3"/><line x1="568.5" y1="134" x2="568.5" y2="499" stroke="#8794a8" stroke-width="1" stroke-dasharray="3 3"/><line x1="600.5" y1="134" x2="600.5" y2="499" stroke="#8794a8" stroke-width="1" stroke-dasharray="3 3"/><line x1="632.5" y1="134" x2="632.5" y2="499" stroke="#8794a8" stroke-width="1" stroke-dasharray="3 3"/><line x1="664.5" y1="134" x2="664.5" y2="499" stroke="#8794a8" stroke-width="1" stroke-dasharray="3 3"/><line x1="696.5" y1="134" x2="696.5" y2="499" stroke="#8794a8" stroke-width="1" stroke-dasharray="3 3"/><line x1="728.5" y1="134" x2="728.5" y2="499" stroke="#8794a8" stroke-width="1" stroke-dasharray="3 3"/><line x1="760.5" y1="134" x2="760.5" y2="499" stroke="#8794a8" stroke-width="1" stroke-dasharray="3 3"/><line x1="792.5" y1="134" x2="792.5" y2="499" stroke="#8794a8" stroke-width="1" stroke-dasharray="3 3"/><line x1="824.5" y1="134" x2="824.5" y2="499" stroke="#8794a8" stroke-width="1" stroke-dasharray="3 3"/><rect x="471" y="500" width="1" height="3" fill="#fff"/><rect x="536" y="500" width="1" height="3" fill="#fff"/><rect x="600" y="500" width="1" height="3" fill="#fff"/><rect x="664" y="500" width="1" height="3" fill="#fff"/><rect x="728" y="500" width="1" height="3" fill="#fff"/><rect x="792" y="500" width="1" height="3" fill="#fff"/><rect x="471.5" y="134.5" width="384" height="365" fill="none" stroke="#fff"/><rect x="472" y="333" width="383" height="1" fill="#778899"/><clipPath id="c471"><rect x="472" y="135" width="383" height="364"/></clipPath><g clip-path="url(#c471)"><rect x="472" y="205" width="1" height="54" fill="#00ff00"/><rect x="470" y="213" width="5" height="46" fill="#00ff00"/><rect x="471" y="214" width="3" height="44" fill="#000"/><rect x="480" y="210" width="1" height="16" fill="#00ff00"/><rect x="478" y="212" width="5" height="3" fill="#00ff00"/><rect x="479" y="213" width="3" height="1" fill="#fff"/><rect x="488" y="190" width="1" height="30" fill="#00ff00"/><rect x="486" y="200" width="5" height="15" fill="#00ff00"/><rect x="487" y="201" width="3" height="13" fill="#000"/><rect x="496" y="183" width="1" height="27" fill="#00ff00"/><rect x="494" y="185" width="5" height="15" fill="#00ff00"/><rect x="495" y="186" width="3" height="13" fill="#000"/><rect x="504" y="176" width="1" height="26" fill="#00ff00"/><rect x="502" y="184" width="5" height="16" fill="#00ff00"/><rect x="503" y="185" width="3" height="14" fill="#fff"/><rect x="512" y="195" width="1" height="23" fill="#00ff00"/><rect x="510" y="198" width="5" height="18" fill="#00ff00"/><rect x="511" y="199" width="3" height="16" fill="#fff"/><rect x="520" y="190" width="1" height="36" fill="#00ff00"/><rect x="518" y="207" width="5" height="9" fill="#00ff00"/><rect x="519" y="208" width="3" height="7" fill="#000"/><rect x="528" y="177" width="1" height="41" fill="#00ff00"/><rect x="526" y="184" width="5" height="24" fill="#00ff00"/><rect x="527" y="185" width="3" height="22" fill="#000"/><rect x="536" y="174" width="1" height="27" fill="#00ff00"/><rect x="534" y="177" width="5" height="8" fill="#00ff00"/><rect x="535" y="178" width="3" height="6" fill="#000"/><rect x="544" y="177" width="1" height="21" fill="#00ff00"/><rect x="542" y="177" width="5" height="13" fill="#00ff00"/><rect x="543" y="178" width="3" height="11" fill="#fff"/><rect x="552" y="155" width="1" height="38" fill="#00ff00"/><rect x="550" y="160" width="5" height="30" fill="#00ff00"/><rect x="551" y="161" width="3" height="28" fill="#000"/><rect x="560" y="152" width="1" height="41" fill="#00ff00"/><rect x="558" y="160" width="5" height="2" fill="#00ff00"/><rect x="568" y="155" width="1" height="78" fill="#00ff00"/><rect x="566" y="161" width="5" height="60" fill="#00ff00"/><rect x="567" y="162" width="3" height="58" fill="#fff"/><rect x="576" y="166" width="1" height="63" fill="#00ff00"/><rect x="574" y="181" width="5" height="40" fill="#00ff00"/><rect x="575" y="182" width="3" height="38" fill="#000"/><rect x="584" y="173" width="1" height="32" fill="#00ff00"/><rect x="582" y="181" width="5" height="2" fill="#00ff00"/><rect x="592" y="176" width="1" height="50" fill="#00ff00"/><rect x="590" y="182" width="5" height="15" fill="#00ff00"/><rect x="591" y="183" width="3" height="13" fill="#fff"/><rect x="600" y="176" width="1" height="34" fill="#00ff00"/><rect x="598" y="188" width="5" height="9" fill="#00ff00"/><rect x="599" y="189" width="3" height="7" fill="#000"/><rect x="608" y="176" width="1" height="59" fill="#00ff00"/><rect x="606" y="188" width="5" height="36" fill="#00ff00"/><rect x="607" y="189" width="3" height="34" fill="#fff"/><rect x="616" y="192" width="1" height="98" fill="#00ff00"/><rect x="614" y="222" width="5" height="57" fill="#00ff00"/><rect x="615" y="223" width="3" height="55" fill="#fff"/><rect x="624" y="215" width="1" height="88" fill="#00ff00"/><rect x="622" y="249" width="5" height="31" fill="#00ff00"/><rect x="623" y="250" width="3" height="29" fill="#000"/><rect x="632" y="224" width="1" height="59" fill="#00ff00"/><rect x="630" y="250" width="5" height="2" fill="#00ff00"/><rect x="640" y="235" width="1" height="35" fill="#00ff00"/><rect x="638" y="251" width="5" height="4" fill="#00ff00"/><rect x="639" y="252" width="3" height="2" fill="#fff"/><rect x="648" y="243" width="1" height="26" fill="#00ff00"/><rect x="646" y="244" width="5" height="11" fill="#00ff00"/><rect x="647" y="245" width="3" height="9" fill="#000"/><rect x="656" y="216" width="1" height="31" fill="#00ff00"/><rect x="654" y="220" width="5" height="25" fill="#00ff00"/><rect x="655" y="221" width="3" height="23" fill="#000"/><rect x="664" y="201" width="1" height="26" fill="#00ff00"/><rect x="662" y="204" width="5" height="17" fill="#00ff00"/><rect x="663" y="205" width="3" height="15" fill="#000"/><rect x="672" y="185" width="1" height="33" fill="#00ff00"/><rect x="670" y="204" width="5" height="4" fill="#00ff00"/><rect x="671" y="205" width="3" height="2" fill="#fff"/><rect x="680" y="192" width="1" height="16" fill="#00ff00"/><rect x="678" y="200" width="5" height="7" fill="#00ff00"/><rect x="679" y="201" width="3" height="5" fill="#000"/><rect x="688" y="191" width="1" height="14" fill="#00ff00"/><rect x="686" y="200" width="5" height="2" fill="#00ff00"/><rect x="696" y="198" width="1" height="33" fill="#00ff00"/><rect x="694" y="201" width="5" height="27" fill="#00ff00"/><rect x="695" y="202" width="3" height="25" fill="#fff"/><rect x="704" y="227" width="1" height="36" fill="#00ff00"/><rect x="702" y="227" width="5" height="23" fill="#00ff00"/><rect x="703" y="228" width="3" height="21" fill="#fff"/><rect x="712" y="240" width="1" height="45" fill="#00ff00"/><rect x="710" y="248" width="5" height="33" fill="#00ff00"/><rect x="711" y="249" width="3" height="31" fill="#fff"/><rect x="720" y="258" width="1" height="32" fill="#00ff00"/><rect x="718" y="273" width="5" height="8" fill="#00ff00"/><rect x="719" y="274" width="3" height="6" fill="#000"/><rect x="728" y="249" width="1" height="27" fill="#00ff00"/><rect x="726" y="252" width="5" height="22" fill="#00ff00"/><rect x="727" y="253" width="3" height="20" fill="#000"/><rect x="736" y="253" width="1" height="25" fill="#00ff00"/><rect x="734" y="253" width="5" height="13" fill="#00ff00"/><rect x="735" y="254" width="3" height="11" fill="#fff"/><rect x="744" y="262" width="1" height="52" fill="#00ff00"/><rect x="742" y="264" width="5" height="11" fill="#00ff00"/><rect x="743" y="265" width="3" height="9" fill="#fff"/><rect x="752" y="263" width="1" height="40" fill="#00ff00"/><rect x="750" y="274" width="5" height="5" fill="#00ff00"/><rect x="751" y="275" width="3" height="3" fill="#fff"/><rect x="760" y="265" width="1" height="34" fill="#00ff00"/><rect x="758" y="270" width="5" height="9" fill="#00ff00"/><rect x="759" y="271" width="3" height="7" fill="#000"/><rect x="768" y="253" width="1" height="62" fill="#00ff00"/><rect x="766" y="270" width="5" height="29" fill="#00ff00"/><rect x="767" y="271" width="3" height="27" fill="#fff"/><rect x="776" y="294" width="1" height="84" fill="#00ff00"/><rect x="774" y="298" width="5" height="63" fill="#00ff00"/><rect x="775" y="299" width="3" height="61" fill="#fff"/><rect x="784" y="354" width="1" height="65" fill="#00ff00"/><rect x="782" y="360" width="5" height="23" fill="#00ff00"/><rect x="783" y="361" width="3" height="21" fill="#fff"/><rect x="792" y="358" width="1" height="106" fill="#00ff00"/><rect x="790" y="381" width="5" height="57" fill="#00ff00"/><rect x="791" y="382" width="3" height="55" fill="#fff"/><rect x="800" y="422" width="1" height="69" fill="#00ff00"/><rect x="798" y="436" width="5" height="2" fill="#00ff00"/><rect x="808" y="371" width="1" height="112" fill="#00ff00"/><rect x="806" y="373" width="5" height="66" fill="#00ff00"/><rect x="807" y="374" width="3" height="64" fill="#000"/><rect x="816" y="313" width="1" height="61" fill="#00ff00"/><rect x="814" y="323" width="5" height="51" fill="#00ff00"/><rect x="815" y="324" width="3" height="49" fill="#000"/><rect x="824" y="302" width="1" height="54" fill="#00ff00"/><rect x="822" y="323" width="5" height="11" fill="#00ff00"/><rect x="823" y="324" width="3" height="9" fill="#fff"/><rect x="832" y="326" width="1" height="9" fill="#00ff00"/><rect x="830" y="332" width="5" height="2" fill="#00ff00"/></g><path d="M475 141 h7 l-3.5 4z" fill="#fff"/></svg>
<div style="position:absolute;left:861px;top:163px;font-size:10px;line-height:10px;color:#fff;white-space:nowrap;transform:scaleX(0.95);transform-origin:0 0;">1873.480</div>
<div style="position:absolute;left:861px;top:196px;font-size:10px;line-height:10px;color:#fff;white-space:nowrap;transform:scaleX(0.95);transform-origin:0 0;">1869.850</div>
<div style="position:absolute;left:861px;top:229px;font-size:10px;line-height:10px;color:#fff;white-space:nowrap;transform:scaleX(0.95);transform-origin:0 0;">1866.110</div>
<div style="position:absolute;left:861px;top:262px;font-size:10px;line-height:10px;color:#fff;white-space:nowrap;transform:scaleX(0.95);transform-origin:0 0;">1862.480</div>
<div style="position:absolute;left:861px;top:295px;font-size:10px;line-height:10px;color:#fff;white-space:nowrap;transform:scaleX(0.95);transform-origin:0 0;">1858.850</div>
<div style="position:absolute;left:861px;top:361px;font-size:10px;line-height:10px;color:#fff;white-space:nowrap;transform:scaleX(0.95);transform-origin:0 0;">1851.480</div>
<div style="position:absolute;left:861px;top:394px;font-size:10px;line-height:10px;color:#fff;white-space:nowrap;transform:scaleX(0.95);transform-origin:0 0;">1847.740</div>
<div style="position:absolute;left:861px;top:427px;font-size:10px;line-height:10px;color:#fff;white-space:nowrap;transform:scaleX(0.95);transform-origin:0 0;">1844.110</div>
<div style="position:absolute;left:861px;top:460px;font-size:10px;line-height:10px;color:#fff;white-space:nowrap;transform:scaleX(0.95);transform-origin:0 0;">1840.370</div>
<div style="position:absolute;left:861px;top:493px;font-size:10px;line-height:10px;color:#fff;white-space:nowrap;transform:scaleX(0.95);transform-origin:0 0;">1836.740</div>
<div style="position:absolute;left:470px;top:505px;font-size:10px;line-height:10px;color:#fff;white-space:nowrap;transform:scaleX(0.91);transform-origin:0 0;">20 Jan 2021</div>
<div style="position:absolute;left:535px;top:505px;font-size:10px;line-height:10px;color:#fff;white-space:nowrap;transform:scaleX(0.91);transform-origin:0 0;">21 Jan 03:00</div>
<div style="position:absolute;left:599px;top:505px;font-size:10px;line-height:10px;color:#fff;white-space:nowrap;transform:scaleX(0.91);transform-origin:0 0;">21 Jan 11:00</div>
<div style="position:absolute;left:663px;top:505px;font-size:10px;line-height:10px;color:#fff;white-space:nowrap;transform:scaleX(0.91);transform-origin:0 0;">21 Jan 19:00</div>
<div style="position:absolute;left:727px;top:505px;font-size:10px;line-height:10px;color:#fff;white-space:nowrap;transform:scaleX(0.91);transform-origin:0 0;">22 Jan 04:00</div>
<div style="position:absolute;left:791px;top:505px;font-size:10px;line-height:10px;color:#fff;white-space:nowrap;transform:scaleX(0.91);transform-origin:0 0;">22 Jan 12:00</div>
<div style="position:absolute;left:487px;top:139px;font-size:10px;line-height:10px;color:#fff;white-space:nowrap;transform:scaleX(0.95);transform-origin:0 0;">XAUUSD,H1</div>
<div style="position:absolute;left:548px;top:139px;font-size:10px;line-height:10px;color:#fff;white-space:nowrap;transform:scaleX(0.95);transform-origin:0 0;">1854.977</div>
<div style="position:absolute;left:589px;top:139px;font-size:10px;line-height:10px;color:#fff;white-space:nowrap;transform:scaleX(0.95);transform-origin:0 0;">1855.617</div>
<div style="position:absolute;left:630px;top:139px;font-size:10px;line-height:10px;color:#fff;white-space:nowrap;transform:scaleX(0.95);transform-origin:0 0;">1854.789</div>
<div style="position:absolute;left:671px;top:139px;font-size:10px;line-height:10px;color:#fff;white-space:nowrap;transform:scaleX(0.95);transform-origin:0 0;">1854.902</div>
<div style="position:absolute;left:857px;top:328px;width:46px;height:11px;background:#fff"></div>
<div style="position:absolute;left:861px;top:330px;font-size:10px;line-height:10px;color:#000;white-space:nowrap;transform:scaleX(0.95);transform-origin:0 0;">1854.902</div></body></html>
